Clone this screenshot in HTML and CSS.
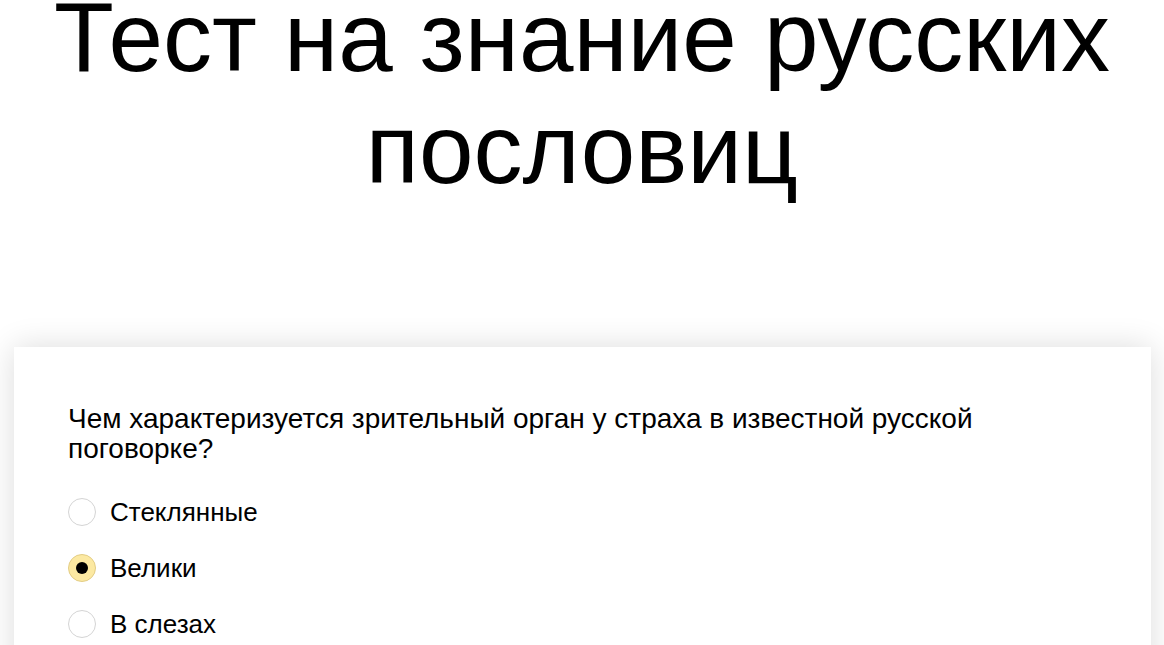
FILE: index.html
```html
<!DOCTYPE html>
<html lang="ru">
<head>
<meta charset="utf-8">
<title>Тест на знание русских пословиц</title>
<link rel="stylesheet" href="styles.css">
</head>
<body>
<h1 class="title">Тест на знание русских пословиц</h1>
<section class="card">
  <p class="question">Чем характеризуется зрительный орган у страха в известной русской поговорке?</p>
  <ul class="options">
    <li class="option"><span class="radio"></span><span class="label">Стеклянные</span></li>
    <li class="option"><span class="radio radio-checked"></span><span class="label">Велики</span></li>
    <li class="option"><span class="radio"></span><span class="label">В слезах</span></li>
  </ul>
</section>
</body>
</html>
```
FILE: styles.css
```css
html, body {
  margin: 0;
  padding: 0;
  background: #fff;
  overflow: hidden;
}
body {
  font-family: "Liberation Sans", Arial, sans-serif;
  color: #000;
}
.title {
  margin: -19px 0 0;
  font-size: 98px;
  font-weight: normal;
  line-height: 112px;
  text-align: center;
}
.card {
  margin: 142px 13px 0 14px;
  padding: 57px 54px 40px;
  background: #fff;
  box-shadow: 0 0 30px rgba(0, 0, 0, 0.14);
}
.question {
  margin: 0;
  font-size: 28px;
  line-height: 30px;
}
.options {
  list-style: none;
  margin: 34px 0 0;
  padding: 0;
  display: flex;
  flex-direction: column;
  gap: 28px;
}
.option {
  display: flex;
  align-items: center;
  gap: 14px;
  height: 28px;
}
.radio {
  box-sizing: border-box;
  width: 28px;
  height: 28px;
  border-radius: 50%;
  border: 1px solid #d4d4d4;
  background: #fff;
  display: flex;
  align-items: center;
  justify-content: center;
  flex: none;
}
.radio-checked {
  background: #fce9a2;
  border-color: #e3cd85;
}
.radio-checked::after {
  content: "";
  width: 12px;
  height: 12px;
  border-radius: 50%;
  background: #000;
}
.label {
  font-size: 26px;
  line-height: 28px;
}
```
